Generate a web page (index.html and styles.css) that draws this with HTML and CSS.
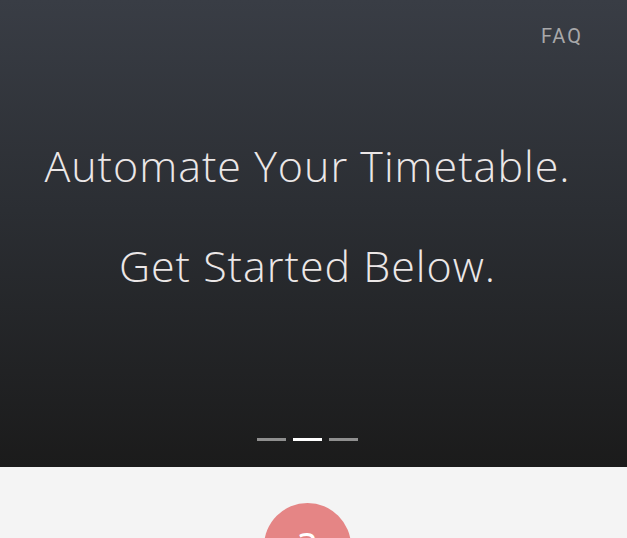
FILE: index.html
```html
<!DOCTYPE html>
<html>
<head>
<meta charset="utf-8">
<link rel="stylesheet" href="styles.css">
</head>
<body>
<section class="hero">
  <nav class="nav"><a class="faq" href="#">FAQ</a></nav>
  <div class="titles">
    <h1 class="title">Automate Your Timetable.</h1>
    <h1 class="title">Get Started Below.</h1>
  </div>
  <div class="dots">
    <span class="dot"></span>
    <span class="dot active"></span>
    <span class="dot"></span>
  </div>
</section>
<section class="below">
  <div class="circle">?</div>
</section>
</body>
</html>
```
FILE: styles.css
```css
html, body {
  margin: 0;
  padding: 0;
  background: #f4f4f4;
  overflow: hidden;
}
.hero {
  height: 467px;
  background: linear-gradient(to bottom, #393d45 0%, #2b2e33 45%, #1b1b1b 100%);
  display: flex;
  flex-direction: column;
  padding-right: 12px;
  box-sizing: border-box;
}
.nav {
  display: flex;
  justify-content: flex-end;
  padding: 22px 32px 0 0;
  height: 28px;
}
.faq {
  font-family: Roboto, "Open Sans", sans-serif;
  font-size: 20px;
  font-weight: 400;
  letter-spacing: 2px;
  color: #a8a8aa;
  text-decoration: none;
  line-height: 28px;
}
.titles {
  display: flex;
  flex-direction: column;
  align-items: center;
  gap: 44px;
  margin-top: 88px;
}
.title {
  margin: 0;
  font-family: "Open Sans", sans-serif;
  font-weight: 300;
  font-size: 43px;
  line-height: 56px;
  color: #ebe7e7;
  letter-spacing: 1px;
}
.dots {
  margin-top: auto;
  margin-bottom: 26px;
  display: flex;
  justify-content: center;
  gap: 7px;
}
.dot {
  width: 29px;
  height: 3px;
  background: #8f8f8f;
}
.dot.active {
  background: #ffffff;
}
.below {
  display: flex;
  justify-content: center;
  padding-top: 36px;
  padding-right: 12px;
  height: 71px;
  box-sizing: border-box;
  overflow: hidden;
}
.circle {
  flex: none;
  width: 87px;
  height: 87px;
  border-radius: 50%;
  background: #e58585;
  color: #fff;
  font-family: "Open Sans", sans-serif;
  font-size: 40px;
  display: flex;
  justify-content: center;
  padding-top: 24px;
  box-sizing: border-box;
  line-height: 1;
}
```
